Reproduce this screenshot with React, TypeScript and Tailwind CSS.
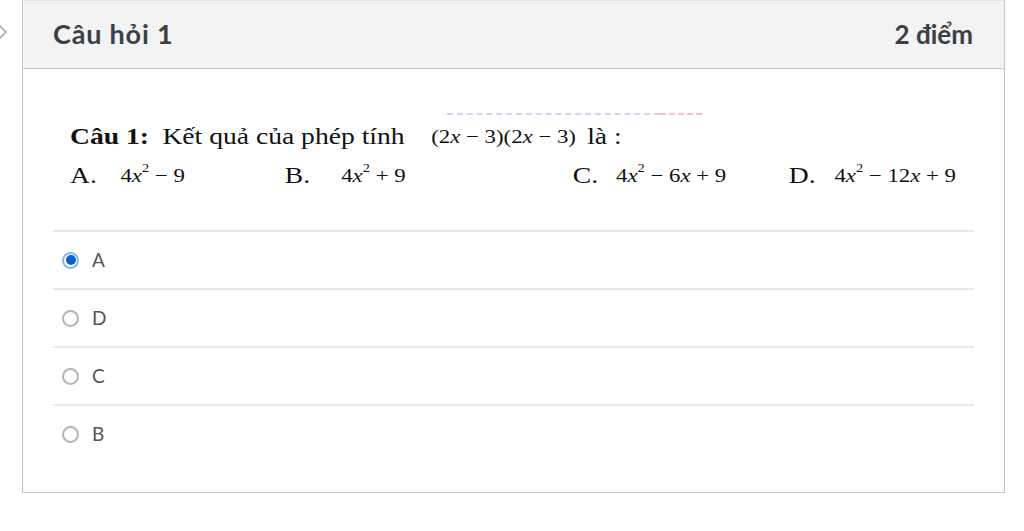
import type { ReactNode } from "react";

const serif = { fontFamily: '"Liberation Serif", "Times New Roman", serif' };

function Sup({ children }: { children: ReactNode }) {
  return <sup className="relative -top-[3px] text-[12px] align-super leading-none">{children}</sup>;
}

function X() {
  return <i>x</i>;
}

const options = [
  { label: "A", checked: true },
  { label: "D", checked: false },
  { label: "C", checked: false },
  { label: "B", checked: false },
];

function Radio({ checked }: { checked: boolean }) {
  if (checked) {
    return (
      <span className="flex h-[17px] w-[17px] items-center justify-center rounded-full border-[2px] border-[#8bb5ee] bg-white">
        <span className="h-[10px] w-[10px] rounded-full bg-[#0b5dd1]" />
      </span>
    );
  }
  return <span className="h-[17px] w-[17px] rounded-full border-[2px] border-[#b5b5b5] bg-white" />;
}

export default function App() {
  return (
    <div className="flex h-[531px] w-[1024px] overflow-hidden bg-white" style={{ fontFamily: "Lato, sans-serif" }}>
      <div className="w-[22px] shrink-0 pt-[23px]">
        <svg width="8" height="18" viewBox="0 0 8 18" fill="none">
          <path d="M-2 1L6 9L-2 17" stroke="#b8b8b8" strokeWidth="2" />
        </svg>
      </div>
      <div className="h-[493px] w-[983px] border-x border-b border-[#c4c4c4] border-t border-t-[#e2e2e2]">
        <div className="flex h-[68px] items-center justify-between border-b border-[#c8c8c8] bg-[#f3f3f3] pl-[30px] pr-[31px] pb-[1px] text-[26px] font-bold text-[#3b4045]">
          <span className="text-[27px] tracking-[0.8px]">Câu hỏi 1</span>
          <span>2 điểm</span>
        </div>
        <div className="px-[30px] pb-[28px]">
          <div className="h-[161px] pl-[17px] pt-[44px] text-[23px] text-[#111]" style={serif}>
            <div className="ml-[377px] flex w-[255px]">
              <div className="w-[213px] border-t-2 border-dashed border-[#cbd8ee]" />
              <div className="w-[42px] border-t-2 border-dashed border-[#efc2c6]" />
            </div>
            <div className="w-[750px] origin-left scale-x-[1.2]">
              <div className="mt-[9px] flex h-[26px] items-center leading-[26px] whitespace-nowrap">
                <b className="w-[77px]">Câu 1:</b>
                <span className="w-[224px]">Kết quả của phép tính</span>
                <span className="w-[130px] text-[19px]">
                  (2<X /> − 3)(2<X /> − 3)
                </span>
                <span>là :</span>
              </div>
              <div className="mt-[13px] flex h-[26px] items-center leading-[26px] whitespace-nowrap">
                <span className="flex w-[179px]">
                  <span className="w-[42px]">A.</span>
                  <span className="text-[19px]">4<X /><Sup>2</Sup> − 9</span>
                </span>
                <span className="flex w-[240px]">
                  <span className="w-[47px]">B.</span>
                  <span className="text-[19px]">4<X /><Sup>2</Sup> + 9</span>
                </span>
                <span className="flex w-[180px]">
                  <span className="w-[36px]">C.</span>
                  <span className="text-[19px]">4<X /><Sup>2</Sup> − 6<X /> + 9</span>
                </span>
                <span className="flex">
                  <span className="w-[38px]">D.</span>
                  <span className="text-[19px]">4<X /><Sup>2</Sup> − 12<X /> + 9</span>
                </span>
              </div>
            </div>
          </div>
          {options.map((o) => (
            <div
              key={o.label}
              className="flex h-[58px] items-center gap-[13px] border-t-2 border-[#e8e8e8] pl-[9px] text-[19px] text-[#555]"
            >
              <Radio checked={o.checked} />
              <span>{o.label}</span>
            </div>
          ))}
        </div>
      </div>
    </div>
  );
}
